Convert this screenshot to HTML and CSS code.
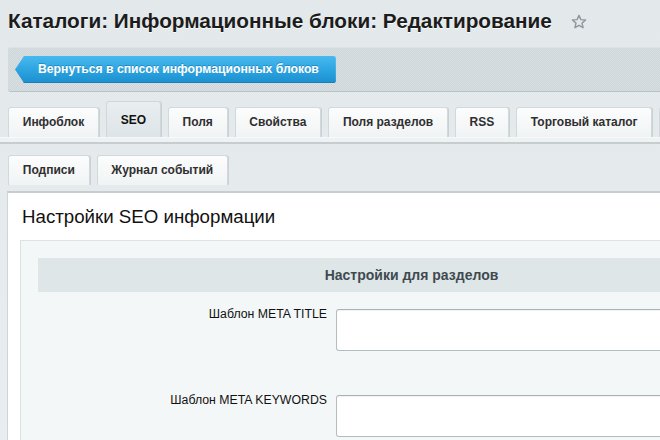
FILE: index.html
```html
<!DOCTYPE html>
<html lang="ru">
<head>
<meta charset="utf-8">
<title>Каталоги: Информационные блоки: Редактирование</title>
<link rel="stylesheet" href="styles.css">
</head>
<body>
<div class="page">
  <div class="title-row">
    <h1 class="title">Каталоги: Информационные блоки: Редактирование</h1>
    <svg class="star" width="16" height="16" viewBox="0 0 16 16" aria-hidden="true">
      <path d="M8 1.3 L9.9 5.6 L14.6 6 L11 9.1 L12.1 13.7 L8 11.3 L3.9 13.7 L5 9.1 L1.4 6 L6.1 5.6 Z" fill="none" stroke="#8e979c" stroke-width="1.4" stroke-linejoin="round"/>
    </svg>
  </div>

  <div class="toolbar">
    <a class="back-btn" href="#">Вернуться в список информационных блоков</a>
  </div>

  <div class="tabbar tabbar-first">
    <span class="tab">Инфоблок</span>
    <span class="tab tab-active">SEO</span>
    <span class="tab">Поля</span>
    <span class="tab">Свойства</span>
    <span class="tab">Поля разделов</span>
    <span class="tab">RSS</span>
    <span class="tab">Торговый каталог</span>
    <span class="tab tab-stub"></span>
  </div>
  <div class="tabbar tabbar-second">
    <span class="tab">Подписи</span>
    <span class="tab">Журнал событий</span>
  </div>

  <div class="panel">
    <h2 class="panel-title">Настройки SEO информации</h2>
    <div class="inner">
      <div class="form">
        <div class="form-head">Настройки для разделов</div>
        <div class="form-row">
          <label class="form-label">Шаблон META TITLE</label>
          <div class="form-input"></div>
        </div>
        <div class="form-row">
          <label class="form-label">Шаблон META KEYWORDS</label>
          <div class="form-input"></div>
        </div>
      </div>
    </div>
  </div>
</div>
</body>
</html>
```

FILE: styles.css
```css
html, body {
  margin: 0;
  padding: 0;
  overflow: hidden;
}
body {
  background: linear-gradient(#e3e9eb, #e8edef);
  font-family: "Liberation Sans", Arial, sans-serif;
  color: #222;
  width: 660px;
  height: 440px;
}
.page {
  width: 1000px;
}
.title-row {
  display: flex;
  align-items: center;
  gap: 19px;
  padding: 9px 0 0 8px;
}
.title {
  margin: 0;
  font-size: 20.75px;
  line-height: 24px;
  font-weight: bold;
  color: #1c1c1c;
  text-shadow: 0 1px 0 rgba(255,255,255,0.8);
}
.star {
  display: block;
  margin-top: 2px;
}
.toolbar {
  margin: 14px 0 0 8px;
  height: 35px;
  padding: 8px 0 0 7px;
  border-radius: 3px 0 0 3px;
  background-color: #d4dbde;
  background-image: repeating-conic-gradient(#cdd5d8 0 25%, #d9e0e3 0 50%);
  background-size: 2px 2px;
  border-bottom: 1px solid #b8c1c5;
  border-top: 1px solid #dde3e5;
  box-sizing: content-box;
}
.back-btn {
  display: inline-block;
  height: 27px;
  line-height: 27px;
  padding: 0 17px 0 23px;
  font-size: 12.2px;
  font-weight: bold;
  color: #fff;
  text-decoration: none;
  text-shadow: 0 -1px 0 rgba(0,70,120,0.35);
  background: linear-gradient(#48b9ef, #2ba3e0 55%, #1b8fcf);
  border-radius: 0 3px 3px 0;
  clip-path: polygon(0 50%, 9px 0, 100% 0, 100% 100%, 9px 100%);
  box-shadow: inset 0 -1px 0 #1680bd;
}
.tabbar {
  display: flex;
  align-items: flex-end;
  gap: 7px;
  padding-left: 8px;
  position: relative;
}
.tabbar-first {
  padding-top: 9px;
  padding-bottom: 5px;
  border-bottom: 2px solid #c6cdd0;
  box-shadow: inset 0 -4px 0 #eef2f3, inset 0 -5px 0 #f6f8f9;
}
.tabbar-second {
  padding-top: 11px;
  padding-bottom: 6px;
}
.tab {
  display: block;
  height: 30px;
  line-height: 29px;
  padding: 0 13.75px;
  font-size: 12px;
  font-weight: bold;
  color: #2f2f2f;
  background: linear-gradient(#fcfdfd, #f0f3f4);
  border: 1px solid #d2d9dc;
  border-bottom: none;
  border-radius: 3px 3px 0 0;
  box-sizing: border-box;
  box-shadow: 1px 0 0 #c9d1d4;
  white-space: nowrap;
}
.tab-stub {
  width: 60px;
}
.tab-active {
  height: 36px;
  padding: 5px 13.75px 0;
  line-height: 26px;
  color: #111;
  background: linear-gradient(#e9eef0, #dde4e7);
  border-color: #cfd7da;
}
.panel {
  background: #fff;
  border-top: 2px solid #c6cdd0;
  border-left: 1px solid #cdd5d8;
  margin-left: 7px;
  padding: 13px 0 0 12px;
  height: 400px;
}
.panel-title {
  margin: 0 0 12px 2px;
  font-size: 18.7px;
  line-height: 22px;
  font-weight: normal;
  color: #111;
}
.inner {
  background: #f4f7f8;
  border: 1px solid #dce3e5;
  padding: 17px 0 0 17px;
  height: 300px;
}
.form {
  width: 747px;
}
.form-head {
  height: 34px;
  line-height: 34px;
  text-align: center;
  background: #dfe6e8;
  font-size: 14px;
  font-weight: bold;
  color: #3e4a50;
}
.form-row {
  display: grid;
  grid-template-columns: 289px 1fr;
  column-gap: 9px;
  padding: 17px 0 27px;
}
.form-label {
  text-align: right;
  font-size: 12.3px;
  line-height: 14px;
  color: #111;
  margin-top: -2px;
}
.form-input {
  height: 42px;
  box-sizing: border-box;
  background: #fff;
  border: 1px solid #b4bcc0;
  border-top-color: #a9b2b6;
  border-radius: 3px;
  box-shadow: inset 0 1px 1px rgba(0,0,0,0.06);
}
```
